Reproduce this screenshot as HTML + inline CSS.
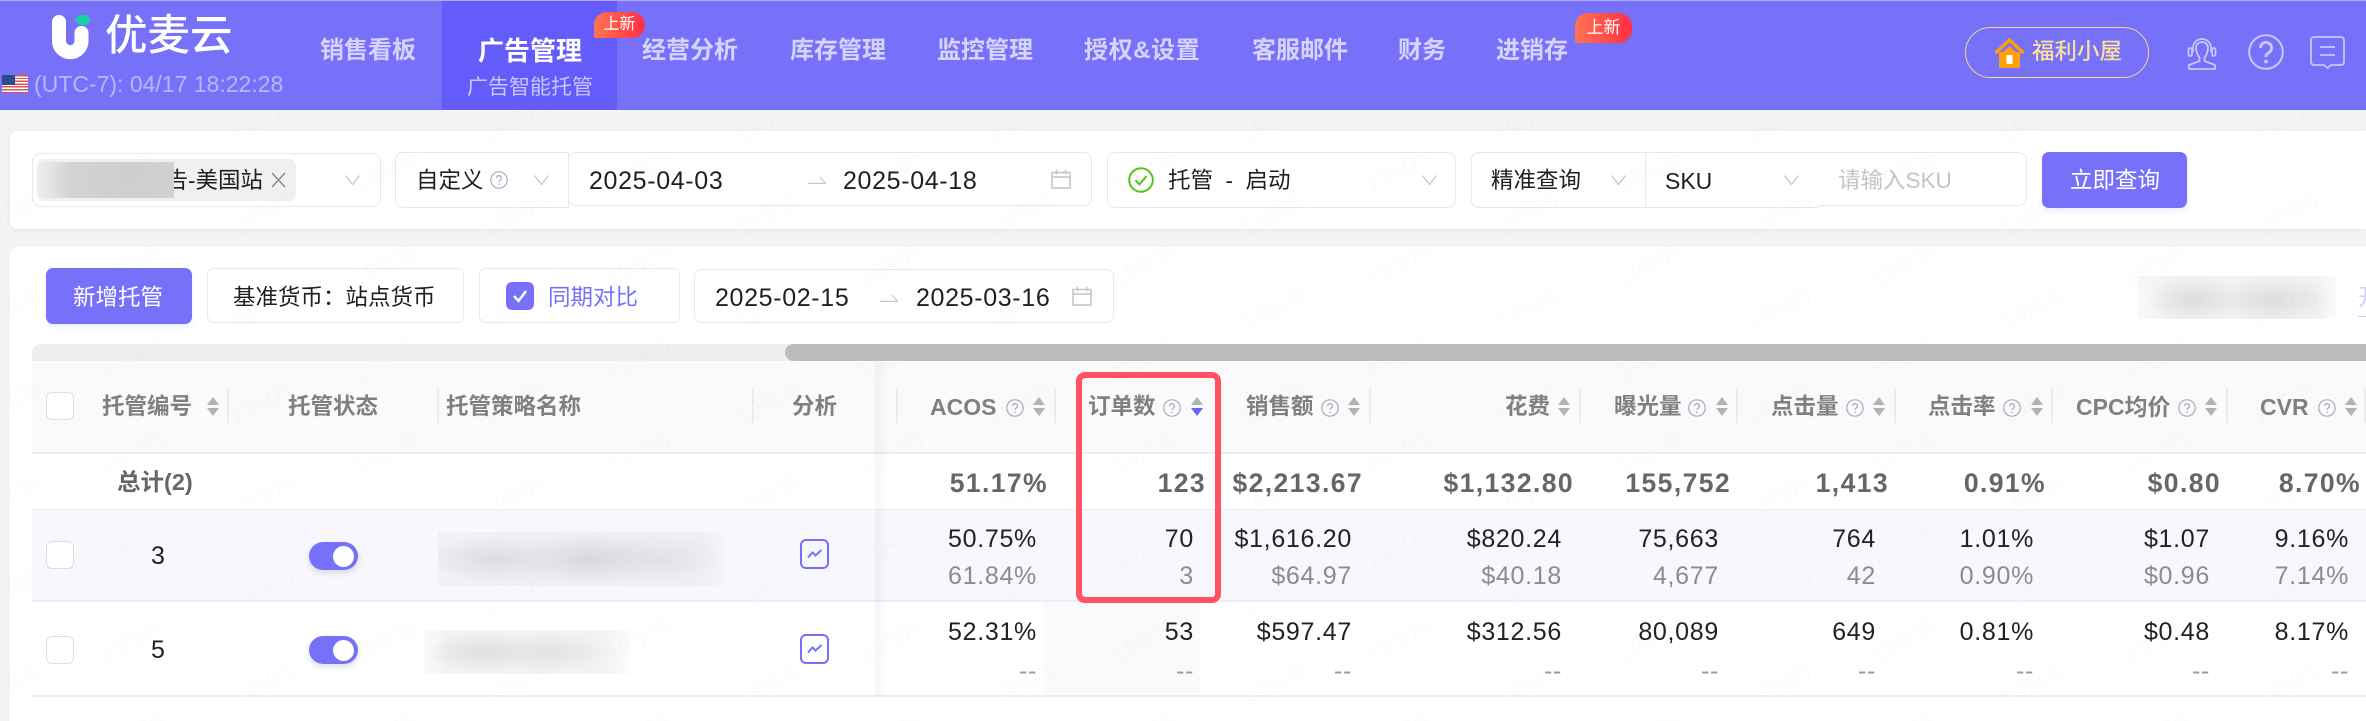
<!DOCTYPE html>
<html lang="zh">
<head>
<meta charset="utf-8">
<title>优麦云</title>
<style>
*{box-sizing:border-box;margin:0;padding:0}
html,body{width:2366px;height:721px;overflow:hidden;background:#f4f4f4}
body{position:relative;font-family:"Liberation Sans","Noto Sans CJK SC",sans-serif;color:#222}
.a,.t,.n,svg.i{position:absolute}
.t{white-space:nowrap;font-size:22.5px;line-height:30px;height:30px;color:#1f1f1f}
.d{font-size:25px;letter-spacing:.65px}
.n{white-space:nowrap;font-size:24px;font-weight:700;line-height:30px;height:30px;top:36px;color:#d6d4fd}
.h{font-weight:700;color:#808080;top:392px}
.box{position:absolute;background:#fff;border:1.5px solid #e8e8e8}
.v{position:absolute;white-space:nowrap;font-size:25px;letter-spacing:.7px;line-height:30px;height:30px;color:#222}
.g{color:#8c8c8c}
.dash{color:#9a9a9a}
.b{font-weight:700;font-size:26.5px;letter-spacing:1.4px;color:#666;top:468px}
.y1{top:524px}.y2{top:561px}.y3{top:617px}.y4{top:656px}
.c1{right:1329px}.c2{right:1172px}.c3{right:1014px}.c4{right:804px}.c5{right:647px}.c6{right:490px}.c7{right:332px}.c8{right:156px}.c9{right:17px}
.e1{right:1318px}.e2{right:1160px}.e3{right:1003px}.e4{right:792px}.e5{right:635px}.e6{right:477px}.e7{right:320px}.e8{right:145px}.e9{right:5px}
.dv{position:absolute;top:388px;width:1.5px;height:35px;background:#ececec}
.badge{position:absolute;background:linear-gradient(90deg,#ff7352,#ff2f45);border-radius:13px 13px 13px 2px;color:#fff;font-size:16px;text-align:center}
.tog{position:absolute;left:309px;width:49px;height:28px;border-radius:14px;background:#7771f9;box-shadow:0 3px 6px rgba(80,80,120,.18)}
.tog:after{content:"";position:absolute;left:24px;top:4px;width:21px;height:21px;border-radius:50%;background:#fff}
.cb{position:absolute;left:46px;width:28px;height:28px;background:#fff;border:1.5px solid #dedede;border-radius:6px}
.an{position:absolute;left:800px;width:29px;height:30px;border:2px solid #7771f9;border-radius:6px}
.an svg{position:absolute;left:5px;top:7px}
</style>
</head>
<body>
<svg width="0" height="0" style="position:absolute">
<defs>
<symbol id="sort" viewBox="0 0 12 19"><path d="M6 0l6 8H0z" fill="#b3b3b3"/><path d="M6 19L0 11h12z" fill="#b3b3b3"/></symbol>
<symbol id="sorta" viewBox="0 0 12 19"><path d="M6 0l6 8H0z" fill="#b3b3b3"/><path d="M6 19L0 11h12z" fill="#6a63fa"/></symbol>
<symbol id="help" viewBox="0 0 18 18"><circle cx="9" cy="9" r="8.2" fill="none" stroke="#a5aac0" stroke-width="1.2"/><path d="M6.6 7a2.4 2.4 0 1 1 3.6 2.1c-.8.5-1.2.9-1.2 1.8" fill="none" stroke="#a5aac0" stroke-width="1.2"/><circle cx="9" cy="13.3" r=".8" fill="#a5aac0"/></symbol>
<symbol id="chev" viewBox="0 0 15 10"><path d="M.5 .5l7 9 7-9" fill="none" stroke="#c6c6c6" stroke-width="1.3"/></symbol>
<symbol id="arr" viewBox="0 0 18 8"><path d="M0 7.4h17.5L12 1" fill="none" stroke="#c8c8c8" stroke-width="1.2"/></symbol>
<symbol id="cal" viewBox="0 0 20 20"><path d="M1 3.5h18v15.500H1zM1 8h18M5.500 .5v5M14.500 .5v5" fill="none" stroke="#c4c4c4" stroke-width="1.500"/></symbol>
<symbol id="lin" viewBox="0 0 16 12"><path d="M1 9.500l4.500-5 3 3L14.500 2" fill="none" stroke="#7771f9" stroke-width="2"/></symbol>
</defs>
</svg>

<!-- header -->
<div class="a" style="left:0;top:0;width:2366px;height:110px;background:#7771f9;border-top:1px solid #aeabfb"></div>
<div class="a" style="left:442px;top:1px;width:175px;height:109px;background:#635cfb"></div>
<svg class="i" style="left:45px;top:10px" width="55" height="55" viewBox="45 10 55 55">
<path d="M59 22V41A11.250 11.250 0 0 0 81.500 41V33" fill="none" stroke="#fff" stroke-width="14" stroke-linecap="round"/>
<ellipse cx="83" cy="20" rx="7" ry="5.200" fill="#14d1a6"/>
</svg>
<div class="t" style="left:105px;top:14px;height:46px;line-height:46px;font-size:42.500px;font-weight:500;color:#fff">优麦云</div>
<div class="a" style="left:2px;top:75px;width:26px;height:18px;background:repeating-linear-gradient(180deg,#d9534f 0,#d9534f 1.400px,#fff 1.400px,#fff 2.800px)"></div>
<div class="a" style="left:2px;top:75px;width:13px;height:10px;background:#2c4a8c"></div>
<div class="t" style="left:34px;top:69px;font-size:23px;color:#b9b6fc">(UTC-7): 04/17 18:22:28</div>

<div class="n" style="left:320px">销售看板</div>
<div class="n" style="left:478px;font-size:26px;color:#fff">广告管理</div>
<div class="t" style="left:467px;top:73px;font-size:21px;color:#c9c6fd">广告智能托管</div>
<div class="n" style="left:642px">经营分析</div>
<div class="n" style="left:790px">库存管理</div>
<div class="n" style="left:937px">监控管理</div>
<div class="n" style="left:1084px;letter-spacing:.6px">授权&amp;设置</div>
<div class="n" style="left:1252px">客服邮件</div>
<div class="n" style="left:1398px">财务</div>
<div class="n" style="left:1496px">进销存</div>
<div class="badge" style="left:594px;top:12px;width:51px;height:26px;line-height:26px">上新</div>
<div class="badge" style="left:1575px;top:13px;width:57px;height:30px;line-height:30px;font-size:17px">上新</div>

<div class="a" style="left:1965px;top:27px;width:184px;height:51px;border:1.500px solid #f6d98c;border-radius:26px"></div>
<svg class="i" style="left:1994px;top:38px" width="31" height="30" viewBox="0 0 31 30">
<path d="M5 14V28a2 2 0 0 0 2 2H24a2 2 0 0 0 2-2V14" fill="#ff9f0a"/><path d="M1.500 15L15.500 2 29.500 15" fill="none" stroke="#ff9f0a" stroke-width="3.400"/><path d="M9 14L15.500 8 22 14V17H9z" fill="#ff9f0a"/><rect x="12.500" y="17" width="6" height="9" fill="#fff"/>
</svg>
<div class="t" style="left:2032px;top:37px;font-weight:500;color:#fbdf9c">福利小屋</div>
<svg class="i" style="left:2187px;top:37px" width="30" height="33" viewBox="0 0 30 33" fill="none" stroke="#c9c6fd" stroke-width="1.800">
<path d="M6 15V11a9 9 0 0 1 18 0v4"/><path d="M9 11c0-3.500 3-6 6-6s6 2.500 6 6c0 4-2 8-3.500 9.500V24L28 28v4H2v-4L12.500 24v-3.500C11 19 9 15 9 11z"/><rect x="1.500" y="11" width="3.500" height="8" rx="1.700"/><rect x="25" y="11" width="3.500" height="8" rx="1.700"/>
</svg>
<svg class="i" style="left:2248px;top:34px" width="36" height="36" viewBox="0 0 36 36" fill="none">
<circle cx="18" cy="18" r="16.800" stroke="#c9c6fd" stroke-width="2"/><path d="M12.500 14a5.500 5.500 0 1 1 8.500 4.500c-2 1.300-3 2-3 4.500" stroke="#c9c6fd" stroke-width="3"/><circle cx="18" cy="27.500" r="1.900" fill="#c9c6fd"/>
</svg>
<svg class="i" style="left:2310px;top:36px" width="35" height="33" viewBox="0 0 35 33" fill="none" stroke="#c9c6fd" stroke-width="1.800">
<path d="M4 1h27a3 3 0 0 1 3 3v22a3 3 0 0 1-3 3H21l-3.500 3-3.500-3H4a3 3 0 0 1-3-3V4a3 3 0 0 1 3-3z"/><path d="M10 11h15M10 19h15"/>
</svg>

<!-- filter card -->
<div class="a" style="left:10px;top:131px;width:2356px;height:98px;background:#fff;border-radius:8px 0 0 8px;box-shadow:0 1px 6px rgba(0,0,0,.05)"></div>
<div class="box" style="left:32px;top:153px;width:349px;height:54px;border-radius:8px"></div>
<div class="a" style="left:37px;top:159px;width:259px;height:42px;background:#f0f0f0;border-radius:7px"></div>
<div class="t" style="right:2103px;top:166px">广告-美国站</div>
<div class="a" style="left:37px;top:162px;width:137px;height:36px;background:linear-gradient(90deg,#eeeeee 0,#d2d2d2 25%,#cfcfcf 70%,#d0d0d0 100%);border-radius:6px 0 0 6px"></div>
<svg class="i" style="left:271px;top:172px" width="15" height="16" viewBox="0 0 15 16"><path d="M1 1l13 14M14 1L1 15" stroke="#8a8a8a" stroke-width="1.500" fill="none"/></svg>
<svg class="i" style="left:345px;top:175px" width="15" height="10"><use href="#chev"/></svg>

<div class="box" style="left:395px;top:152px;width:174px;height:56px;border-radius:8px 0 0 8px"></div>
<div class="t" style="left:416px;top:166px">自定义</div>
<svg class="i" style="left:490px;top:171px" width="18" height="18"><use href="#help"/></svg>
<svg class="i" style="left:534px;top:175px" width="15" height="10"><use href="#chev"/></svg>

<div class="box" style="left:568px;top:152px;width:524px;height:54px;border-radius:8px"></div>
<div class="t d" style="left:589px;top:166px">2025-04-03</div>
<svg class="i" style="left:808px;top:176px" width="18" height="8"><use href="#arr"/></svg>
<div class="t d" style="left:843px;top:166px">2025-04-18</div>
<svg class="i" style="left:1051px;top:169px" width="20" height="20"><use href="#cal"/></svg>

<div class="box" style="left:1107px;top:152px;width:349px;height:56px;border-radius:8px"></div>
<svg class="i" style="left:1128px;top:167px" width="26" height="26" viewBox="0 0 26 26" fill="none" stroke="#52c41a" stroke-width="2"><circle cx="13" cy="13" r="11.800"/><path d="M7.500 13l4 4.500 7-8.500"/></svg>
<div class="t" style="left:1168px;top:166px">托管&nbsp; -&nbsp; 启动</div>
<svg class="i" style="left:1422px;top:175px" width="15" height="10"><use href="#chev"/></svg>

<div class="box" style="left:1471px;top:152px;width:175px;height:56px;border-radius:8px 0 0 8px"></div>
<div class="t" style="left:1491px;top:166px">精准查询</div>
<svg class="i" style="left:1611px;top:175px" width="15" height="10"><use href="#chev"/></svg>
<div class="box" style="left:1645px;top:152px;width:174px;height:56px"></div>
<div class="t" style="left:1665px;top:166px;font-size:23px">SKU</div>
<svg class="i" style="left:1784px;top:175px" width="15" height="10"><use href="#chev"/></svg>
<div class="box" style="left:1818px;top:152px;width:209px;height:54px;border-radius:0 8px 8px 0;border-left:0"></div>
<div class="t" style="left:1838px;top:166px;color:#c4c4c4">请输入SKU</div>
<div class="a" style="left:2042px;top:152px;width:145px;height:56px;background:#7771f9;border-radius:7px;box-shadow:0 3px 5px rgba(119,113,249,.12)"></div>
<div class="t" style="left:2070px;top:166px;color:#fff">立即查询</div>

<!-- main card -->
<div class="a" style="left:10px;top:247px;width:2356px;height:474px;background:#fff;border-radius:8px 0 0 0"></div>
<div class="a" style="left:46px;top:268px;width:146px;height:56px;background:#7771f9;border-radius:7px;box-shadow:0 3px 5px rgba(119,113,249,.12)"></div>
<div class="t" style="left:73px;top:283px;color:#fff">新增托管</div>
<div class="box" style="left:207px;top:268px;width:257px;height:55px;border-radius:7px"></div>
<div class="t" style="left:233px;top:283px">基准货币：站点货币</div>
<div class="box" style="left:479px;top:268px;width:201px;height:55px;border-radius:7px"></div>
<svg class="i" style="left:506px;top:282px" width="28" height="28" viewBox="0 0 28 28"><rect width="28" height="28" rx="6" fill="#7771f9"/><path d="M8 14l4.500 5L20 9" fill="none" stroke="#fff" stroke-width="2.400"/></svg>
<div class="t" style="left:548px;top:283px;color:#7771f9">同期对比</div>
<div class="box" style="left:694px;top:269px;width:420px;height:54px;border-radius:7px"></div>
<div class="t d" style="left:715px;top:283px">2025-02-15</div>
<svg class="i" style="left:880px;top:294px" width="18" height="8"><use href="#arr"/></svg>
<div class="t d" style="left:916px;top:283px">2025-03-16</div>
<svg class="i" style="left:1072px;top:286px" width="20" height="20"><use href="#cal"/></svg>

<div class="a" style="left:2138px;top:276px;width:199px;height:43px;background:radial-gradient(ellipse 48px 24px at 28% 55%,#dcdcdc,rgba(240,240,240,0) 100%),radial-gradient(ellipse 60px 24px at 68% 55%,#dddddd,rgba(240,240,240,0) 100%),linear-gradient(90deg,#f8f8f8,#f2f2f2 15%,#f2f2f2 90%,#fbfbfb)"></div>
<div class="t" style="left:2358px;top:283px;color:#cfcdfd;border-bottom:1.500px solid #cfcdfd;height:34px">开启</div>

<!-- scrollbar -->
<div class="a" style="left:32px;top:344px;width:760px;height:17px;background:#eee;border-radius:8px 0 0 0"></div>
<div class="a" style="left:785px;top:344px;width:1581px;height:17px;background:#bcbcbc;border-radius:9px 0 0 9px"></div>

<!-- table -->
<div class="a" style="left:32px;top:361px;width:2334px;height:92px;background:#fafafa"></div>
<div class="a" style="left:32px;top:452px;width:2334px;height:2px;background:#eeeeee"></div>
<div class="a" style="left:32px;top:509px;width:2334px;height:92px;background:#f7f7fd;border-top:1px solid #efeff3"></div>
<div class="a" style="left:32px;top:600px;width:2334px;height:2px;background:#eeeef2"></div>
<div class="a" style="left:1044px;top:602px;width:156px;height:94px;background:#fafafa"></div>
<div class="a" style="left:32px;top:695px;width:2334px;height:1.500px;background:#eeeeee"></div>
<div class="a" style="left:875px;top:361px;width:14px;height:335px;background:linear-gradient(90deg,rgba(0,0,0,.035),rgba(0,0,0,0))"></div>

<div class="cb" style="top:392px"></div>
<div class="t h" style="left:102px">托管编号</div>
<svg class="i" style="left:207px;top:397px" width="12" height="19"><use href="#sort"/></svg>
<div class="dv" style="left:227px"></div>
<div class="t h" style="left:288px">托管状态</div>
<div class="dv" style="left:437px"></div>
<div class="t h" style="left:446px">托管策略名称</div>
<div class="dv" style="left:752px"></div>
<div class="t h" style="left:792px">分析</div>
<div class="dv" style="left:896px"></div>

<div class="t h" style="left:930px;font-size:23px">ACOS</div>
<svg class="i" style="left:1006px;top:399px" width="18" height="18"><use href="#help"/></svg>
<svg class="i" style="left:1033px;top:397px" width="12" height="19"><use href="#sort"/></svg>
<div class="dv" style="left:1054px"></div>
<div class="t h" style="left:1088px">订单数</div>
<svg class="i" style="left:1163px;top:399px" width="18" height="18"><use href="#help"/></svg>
<svg class="i" style="left:1191px;top:397px" width="12" height="19"><use href="#sorta"/></svg>
<div class="t h" style="left:1246px">销售额</div>
<svg class="i" style="left:1321px;top:399px" width="18" height="18"><use href="#help"/></svg>
<svg class="i" style="left:1348px;top:397px" width="12" height="19"><use href="#sort"/></svg>
<div class="dv" style="left:1369px"></div>
<div class="t h" style="left:1505px">花费</div>
<svg class="i" style="left:1558px;top:397px" width="12" height="19"><use href="#sort"/></svg>
<div class="dv" style="left:1579px"></div>
<div class="t h" style="left:1614px">曝光量</div>
<svg class="i" style="left:1688px;top:399px" width="18" height="18"><use href="#help"/></svg>
<svg class="i" style="left:1716px;top:397px" width="12" height="19"><use href="#sort"/></svg>
<div class="dv" style="left:1736px"></div>
<div class="t h" style="left:1771px">点击量</div>
<svg class="i" style="left:1846px;top:399px" width="18" height="18"><use href="#help"/></svg>
<svg class="i" style="left:1873px;top:397px" width="12" height="19"><use href="#sort"/></svg>
<div class="dv" style="left:1894px"></div>
<div class="t h" style="left:1928px">点击率</div>
<svg class="i" style="left:2003px;top:399px" width="18" height="18"><use href="#help"/></svg>
<svg class="i" style="left:2031px;top:397px" width="12" height="19"><use href="#sort"/></svg>
<div class="dv" style="left:2051px"></div>
<div class="t h" style="left:2076px;font-size:23px">CPC均价</div>
<svg class="i" style="left:2178px;top:399px" width="18" height="18"><use href="#help"/></svg>
<svg class="i" style="left:2205px;top:397px" width="12" height="19"><use href="#sort"/></svg>
<div class="dv" style="left:2226px"></div>
<div class="t h" style="left:2260px;font-size:23px">CVR</div>
<svg class="i" style="left:2318px;top:399px" width="18" height="18"><use href="#help"/></svg>
<svg class="i" style="left:2345px;top:397px" width="12" height="19"><use href="#sort"/></svg>
<div class="dv" style="left:2364px"></div>

<!-- total -->
<div class="t" style="left:117px;top:467px;font-size:23.500px;font-weight:700;color:#666">总计(2)</div>
<div class="v b e1">51.17%</div><div class="v b e2">123</div><div class="v b e3">$2,213.67</div><div class="v b e4">$1,132.80</div><div class="v b e5">155,752</div><div class="v b e6">1,413</div><div class="v b e7">0.91%</div><div class="v b e8">$0.80</div><div class="v b e9">8.70%</div>

<!-- row 1 -->
<div class="cb" style="top:541px"></div>
<div class="v" style="left:151px;top:541px">3</div>
<div class="tog" style="top:542px"></div>
<div class="a" style="left:438px;top:532px;width:288px;height:54px;background:radial-gradient(ellipse 70px 24px at 20% 50%,#dcdce0,rgba(240,240,245,0) 100%),radial-gradient(ellipse 75px 26px at 52% 50%,#d8d8dc,rgba(240,240,245,0) 100%),radial-gradient(ellipse 65px 24px at 78% 50%,#e2e2e6,rgba(240,240,245,0) 100%),linear-gradient(90deg,#f0f0f5,#eeeef3 90%,#f5f5fa)"></div>
<div class="an" style="top:539px"><svg width="16" height="12"><use href="#lin"/></svg></div>
<div class="v y1 c1">50.75%</div><div class="v y2 c1 g">61.84%</div>
<div class="v y1 c2">70</div><div class="v y2 c2 g">3</div>
<div class="v y1 c3">$1,616.20</div><div class="v y2 c3 g">$64.97</div>
<div class="v y1 c4">$820.24</div><div class="v y2 c4 g">$40.18</div>
<div class="v y1 c5">75,663</div><div class="v y2 c5 g">4,677</div>
<div class="v y1 c6">764</div><div class="v y2 c6 g">42</div>
<div class="v y1 c7">1.01%</div><div class="v y2 c7 g">0.90%</div>
<div class="v y1 c8">$1.07</div><div class="v y2 c8 g">$0.96</div>
<div class="v y1 c9">9.16%</div><div class="v y2 c9 g">7.14%</div>

<!-- row 2 -->
<div class="cb" style="top:636px"></div>
<div class="v" style="left:151px;top:635px">5</div>
<div class="tog" style="top:636px"></div>
<div class="a" style="left:423px;top:630px;width:206px;height:44px;background:radial-gradient(ellipse 60px 20px at 30% 50%,#dedede,rgba(245,245,245,0) 100%),radial-gradient(ellipse 60px 20px at 62% 50%,#e2e2e2,rgba(245,245,245,0) 100%),linear-gradient(90deg,#fbfbfb,#f2f2f2 12%,#f2f2f2 88%,#fbfbfb)"></div>
<div class="an" style="top:634px"><svg width="16" height="12"><use href="#lin"/></svg></div>
<div class="v y3 c1">52.31%</div><div class="v y4 c1 dash">--</div>
<div class="v y3 c2">53</div><div class="v y4 c2 dash">--</div>
<div class="v y3 c3">$597.47</div><div class="v y4 c3 dash">--</div>
<div class="v y3 c4">$312.56</div><div class="v y4 c4 dash">--</div>
<div class="v y3 c5">80,089</div><div class="v y4 c5 dash">--</div>
<div class="v y3 c6">649</div><div class="v y4 c6 dash">--</div>
<div class="v y3 c7">0.81%</div><div class="v y4 c7 dash">--</div>
<div class="v y3 c8">$0.48</div><div class="v y4 c8 dash">--</div>
<div class="v y3 c9">8.17%</div><div class="v y4 c9 dash">--</div>

<!-- highlight -->
<div class="a" style="left:1076px;top:372px;width:145px;height:231px;border:6px solid #ff5263;border-radius:9px"></div>

<!-- watermark -->
<svg class="i" style="left:0;top:111px;pointer-events:none" width="2366" height="610">
<defs>
<pattern id="wm" x="0" y="-111" width="253" height="94" patternUnits="userSpaceOnUse">
<g font-family="Liberation Sans,sans-serif" font-size="25" fill="#000" fill-opacity=".012">
<text transform="translate(105 100) rotate(-27)">19505</text>
<text transform="translate(105 6) rotate(-27)">19505</text>
<text transform="translate(-148 100) rotate(-27)">19505</text>
<text transform="translate(-148 6) rotate(-27)">19505</text>
<text transform="translate(234 50) rotate(-27)">19505</text>
<text transform="translate(234 144) rotate(-27)">19505</text>
<text transform="translate(-19 50) rotate(-27)">19505</text>
<text transform="translate(-19 144) rotate(-27)">19505</text>
</g>
</pattern>
</defs>
<rect width="2366" height="610" fill="url(#wm)"/>
</svg>
</body>
</html>
